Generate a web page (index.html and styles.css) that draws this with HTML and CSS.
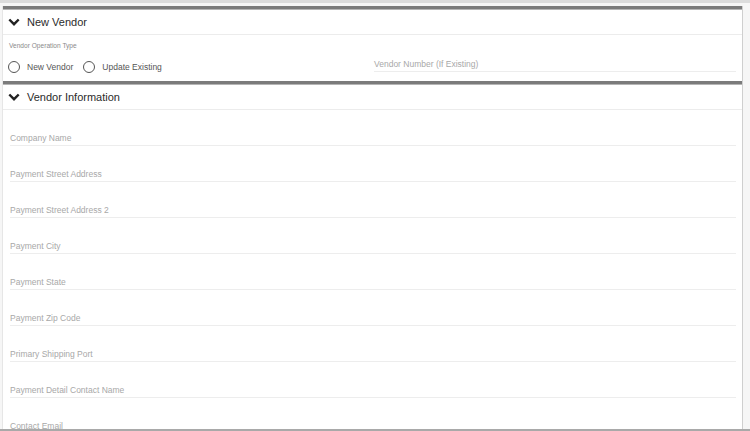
FILE: index.html
```html
<!DOCTYPE html>
<html>
<head>
<meta charset="utf-8">
<link rel="stylesheet" href="styles.css">
</head>
<body>
<div class="frame">
  <div class="topstrip"></div>
  <div class="card">
    <section class="section">
      <div class="sec-head">
        <svg class="chev" width="12" height="8" viewBox="0 0 12 8"><polyline points="1.3,1.5 6,6.2 10.7,1.5" fill="none" stroke="#222" stroke-width="2.4"/></svg>
        <span>New Vendor</span>
      </div>
      <div class="sec1-body">
        <div class="optype">
          <div class="tiny">Vendor Operation Type</div>
          <div class="radios">
            <label class="radio"><span class="circle"></span>New Vendor</label>
            <label class="radio"><span class="circle"></span>Update Existing</label>
          </div>
        </div>
        <div class="vnum">
          <div class="field short"><span class="ph">Vendor Number (If Existing)</span></div>
        </div>
      </div>
    </section>
    <section class="section">
      <div class="sec-head">
        <svg class="chev" width="12" height="8" viewBox="0 0 12 8"><polyline points="1.3,1.5 6,6.2 10.7,1.5" fill="none" stroke="#222" stroke-width="2.4"/></svg>
        <span>Vendor Information</span>
      </div>
      <div class="fields">
        <div class="field"><span class="ph">Company Name</span></div>
        <div class="field"><span class="ph">Payment Street Address</span></div>
        <div class="field"><span class="ph">Payment Street Address 2</span></div>
        <div class="field"><span class="ph">Payment City</span></div>
        <div class="field"><span class="ph">Payment State</span></div>
        <div class="field"><span class="ph">Payment Zip Code</span></div>
        <div class="field"><span class="ph">Primary Shipping Port</span></div>
        <div class="field"><span class="ph">Payment Detail Contact Name</span></div>
        <div class="field"><span class="ph">Contact Email</span></div>
        <div class="field"><span class="ph">Contact Phone</span></div>
      </div>
    </section>
  </div>
</div>
</body>
</html>
```
FILE: styles.css
```css
html, body {
  margin: 0;
  padding: 0;
  background: #fff;
}
body {
  font-family: "Liberation Sans", Arial, sans-serif;
}
.frame {
  height: 431px;
  box-sizing: border-box;
  overflow: hidden;
  border-bottom: 2px solid #a9a9a9;
  background: #f6f6f6;
}
.topstrip {
  height: 3px;
  background: #dcdcdc;
  margin-bottom: 3px;
}
.card {
  margin-left: 2px;
  width: 739px;
  background: #fff;
  border-left: 1px solid #e6e6e6;
  border-right: 1px solid #cfcfcf;
}
.section {
  border-top: 3px solid #7b7b7b;
  box-shadow: inset 0 1px 0 #b5b5b5;
}
.sec-head {
  height: 25px;
  display: flex;
  align-items: center;
  gap: 7px;
  padding-left: 5px;
  border-bottom: 1px solid #ececec;
  font-size: 11px;
  color: #2b2b2b;
}
.chev {
  display: block;
  margin-top: 1px;
}
.sec1-body {
  display: grid;
  grid-template-columns: 371px 1fr;
  height: 46px;
  box-sizing: border-box;
}
.optype {
  padding: 7px 0 0 6px;
}
.tiny {
  font-size: 6.6px;
  line-height: 8px;
  color: #8a8a8a;
}
.radios {
  display: flex;
  align-items: center;
  margin-top: 11px;
  font-size: 8.5px;
  color: #555;
}
.radio {
  display: flex;
  align-items: center;
  gap: 7px;
  margin-left: -1px;
  margin-right: 11px;
}
.circle {
  width: 10px;
  height: 10px;
  border: 1.2px solid #555;
  border-radius: 50%;
  display: block;
}
.vnum {
  padding-right: 6px;
}
.field {
  border-bottom: 1px solid #ededed;
  display: flex;
  align-items: flex-end;
  padding-bottom: 2px;
  box-sizing: content-box;
  height: 33px;
}
.field.short {
  height: 34px;
}
.ph {
  font-size: 8.5px;
  line-height: 10px;
  color: #a8a8a8;
}
.fields {
  padding: 0 6px 0 7px;
}
```
